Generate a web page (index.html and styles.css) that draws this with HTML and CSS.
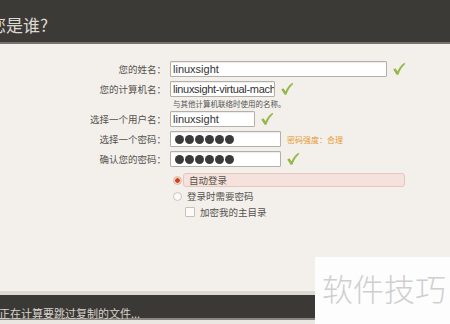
FILE: index.html
```html
<!DOCTYPE html>
<html lang="zh-CN">
<head>
    <meta charset="UTF-8">
    <title>您是谁?</title>
    <link rel="stylesheet" href="styles.css">
</head>
<body>
    <header class="top-bar">
        <h1 class="title">您是谁?</h1>
    </header>

    <main class="setup">
        <div class="row">
            <span class="field-label">您的姓名：</span>
            <div class="input name-input">linuxsight</div>
            <svg class="check" viewBox="0 0 14 14"><path d="M1.2 7.6 L3.4 6.2 L5.6 9.2 C7.2 5.6 9.6 2.6 12.6 0.8 L13.2 2 C10.6 4.2 8.2 7.8 6.4 12.8 L4.6 12.8 Z"/></svg>
        </div>
        <div class="row">
            <span class="field-label">您的计算机名：</span>
            <div class="input host-input">linuxsight-virtual-machine</div>
            <svg class="check" viewBox="0 0 14 14"><path d="M1.2 7.6 L3.4 6.2 L5.6 9.2 C7.2 5.6 9.6 2.6 12.6 0.8 L13.2 2 C10.6 4.2 8.2 7.8 6.4 12.8 L4.6 12.8 Z"/></svg>
        </div>
        <div class="hint">与其他计算机联络时使用的名称。</div>
        <div class="row">
            <span class="field-label">选择一个用户名：</span>
            <div class="input user-input">linuxsight</div>
            <svg class="check" viewBox="0 0 14 14"><path d="M1.2 7.6 L3.4 6.2 L5.6 9.2 C7.2 5.6 9.6 2.6 12.6 0.8 L13.2 2 C10.6 4.2 8.2 7.8 6.4 12.8 L4.6 12.8 Z"/></svg>
        </div>
        <div class="row">
            <span class="field-label">选择一个密码：</span>
            <div class="input pass-input">
                <span class="dot"></span><span class="dot"></span><span class="dot"></span>
                <span class="dot"></span><span class="dot"></span><span class="dot"></span>
            </div>
            <span class="strength">密码强度：合理</span>
        </div>
        <div class="row">
            <span class="field-label">确认您的密码：</span>
            <div class="input pass-input">
                <span class="dot"></span><span class="dot"></span><span class="dot"></span>
                <span class="dot"></span><span class="dot"></span><span class="dot"></span>
            </div>
            <svg class="check" viewBox="0 0 14 14"><path d="M1.2 7.6 L3.4 6.2 L5.6 9.2 C7.2 5.6 9.6 2.6 12.6 0.8 L13.2 2 C10.6 4.2 8.2 7.8 6.4 12.8 L4.6 12.8 Z"/></svg>
        </div>

        <div class="options">
            <div class="option">
                <span class="radio checked"></span>
                <span class="option-text selected">自动登录</span>
            </div>
            <div class="option">
                <span class="radio"></span>
                <span class="option-text">登录时需要密码</span>
            </div>
            <div class="option sub-option">
                <span class="checkbox"></span>
                <span class="option-text">加密我的主目录</span>
            </div>
        </div>
    </main>

    <footer class="status-bar">
        <div class="status">正在计算要跳过复制的文件...</div>
    </footer>

    <div class="watermark">软件技巧</div>
</body>
</html>
```

FILE: styles.css
```css
body {
    margin: 0;
    width: 450px;
    height: 324px;
    overflow: hidden;
    position: relative;
    display: flex;
    flex-direction: column;
    background-color: #f3f0ec;
    font-family: "Noto Sans CJK SC", sans-serif;
}
.top-bar {
    height: 42px;
    flex-shrink: 0;
    background-color: #3c3a36;
    border-bottom: 2px solid #75716b;
    display: flex;
    align-items: center;
}
.title {
    margin: 6px 0 0 -11px;
    font-size: 17px;
    font-weight: normal;
    line-height: 1;
    color: #dcd8d2;
}
.setup {
    flex: 1;
    padding-top: 15px;
}
.row {
    display: flex;
    align-items: center;
    height: 20px;
}
.field-label {
    width: 170px;
    box-sizing: border-box;
    padding-right: 4px;
    text-align: right;
    font-size: 9.5px;
    color: #55524c;
}
.input {
    box-sizing: border-box;
    height: 16px;
    padding: 0 2px;
    border: 1px solid #b4b0a9;
    border-radius: 1px;
    background-color: #fff;
    box-shadow: inset 0 1px 1px rgba(0, 0, 0, 0.08);
    font: 11px/14px "Liberation Sans", sans-serif;
    color: #333;
    white-space: nowrap;
    overflow: hidden;
}
.name-input {
    width: 217px;
}
.host-input {
    width: 105px;
    padding-right: 0;
    letter-spacing: -0.3px;
}
.user-input {
    width: 85px;
}
.pass-input {
    width: 111px;
    display: flex;
    align-items: center;
    gap: 1px;
    padding-left: 4px;
}
.dot {
    width: 9px;
    height: 9px;
    border-radius: 50%;
    background-color: #3a3a3a;
}
.check {
    width: 14px;
    height: 14px;
    margin-left: 5px;
    fill: #95b949;
}
.hint {
    height: 10px;
    padding-left: 173px;
    font-size: 7.5px;
    line-height: 10px;
    color: #555;
}
.strength {
    margin-left: 6px;
    font-size: 8px;
    color: #e49a2f;
}
.options {
    margin-left: 173px;
    padding-top: 3px;
}
.option {
    display: flex;
    align-items: center;
    height: 16px;
    font-size: 9.5px;
    color: #55524c;
}
.option-text {
    padding-left: 5px;
}
.option-text.selected {
    box-sizing: border-box;
    width: 222px;
    height: 14px;
    line-height: 12px;
    margin-left: 1px;
    border: 1px solid #e6c6bc;
    border-radius: 3px;
    background-color: #f5e2dc;
}
.radio {
    box-sizing: border-box;
    width: 9px;
    height: 9px;
    border-radius: 50%;
    border: 1px solid #c9c5bf;
    background-color: #fbfaf8;
}
.radio.checked {
    border-color: #e6b4a4;
    background: radial-gradient(circle, #c8431a 0, #c8431a 2px, #f2d3c8 2.5px);
}
.sub-option {
    padding-left: 12px;
}
.checkbox {
    box-sizing: border-box;
    width: 10px;
    height: 10px;
    border: 1px solid #c4c0ba;
    border-radius: 1px;
    background-color: #fbfaf8;
}
.status-bar {
    flex-shrink: 0;
    border-top: 4px solid #dcd8d2;
    padding-bottom: 4px;
    background-color: #eae7e3;
}
.status {
    height: 25px;
    box-sizing: border-box;
    padding-top: 12px;
    margin-left: -1px;
    background-color: #3b3935;
    border-bottom: 2px solid #8b8781;
    font-size: 11px;
    line-height: 12px;
    color: #d8d4ce;
}
.watermark {
    position: absolute;
    right: 0;
    bottom: 0;
    width: 135px;
    height: 67px;
    box-sizing: border-box;
    padding: 14px 0 0 7px;
    background-color: #fdfdfd;
    font-size: 31px;
    font-weight: 300;
    line-height: 34px;
    color: #cfcfcf;
}
```
